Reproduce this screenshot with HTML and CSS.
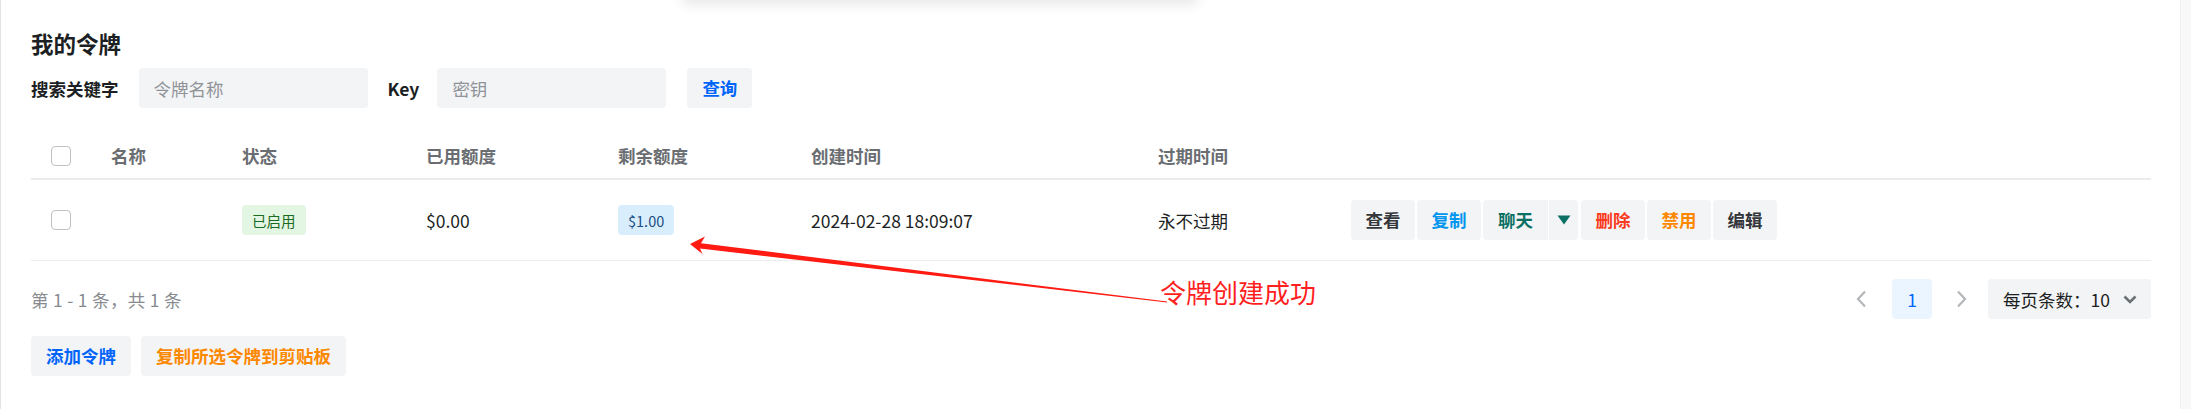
FILE: index.html
```html
<!DOCTYPE html>
<html lang="zh-CN">
<head>
<meta charset="utf-8">
<title>我的令牌</title>
<link rel="stylesheet" href="styles.css">
</head>
<body>
<div class="page">
  <div class="topcard"></div>
  <main class="content">
    <h1 class="title">我的令牌</h1>
    <div class="search">
      <span class="label">搜索关键字</span>
      <div class="input"><span class="ph">令牌名称</span></div>
      <span class="label key">Key</span>
      <div class="input"><span class="ph">密钥</span></div>
      <button class="btn btn-blue">查询</button>
    </div>

    <div class="table">
      <div class="row thead">
        <div class="cell"><span class="checkbox"></span></div>
        <div class="cell">名称</div>
        <div class="cell">状态</div>
        <div class="cell">已用额度</div>
        <div class="cell">剩余额度</div>
        <div class="cell">创建时间</div>
        <div class="cell">过期时间</div>
        <div class="cell"></div>
      </div>
      <div class="row tbody">
        <div class="cell"><span class="checkbox"></span></div>
        <div class="cell"></div>
        <div class="cell"><span class="tag tag-green">已启用</span></div>
        <div class="cell">$0.00</div>
        <div class="cell"><span class="tag tag-blue">$1.00</span></div>
        <div class="cell">2024-02-28 18:09:07</div>
        <div class="cell">永不过期</div>
        <div class="cell actions">
          <button class="btn act c-dark">查看</button>
          <button class="btn act c-lblue">复制</button>
          <div class="split">
            <button class="btn act c-teal left">聊天</button>
            <button class="btn act-arrow right" aria-label="更多">
              <svg width="14" height="10" viewBox="0 0 14 10"><path d="M0.5 0.5 H13.5 L7 9.5 Z" fill="#0b7064"/></svg>
            </button>
          </div>
          <button class="btn act c-red">删除</button>
          <button class="btn act c-orange">禁用</button>
          <button class="btn act c-dark">编辑</button>
        </div>
      </div>
    </div>

    <div class="pager">
      <div class="total">第 1 - 1 条，共 1 条</div>
      <div class="pages">
        <span class="pg-arrow prev">
          <svg width="12" height="18" viewBox="0 0 12 18"><polyline points="10,1.5 3,9 10,16.5" fill="none" stroke="#b4b7ba" stroke-width="2.2"/></svg>
        </span>
        <span class="pg-num">1</span>
        <span class="pg-arrow next">
          <svg width="12" height="18" viewBox="0 0 12 18"><polyline points="2,1.5 9,9 2,16.5" fill="none" stroke="#b4b7ba" stroke-width="2.2"/></svg>
        </span>
        <div class="pagesize">
          <span>每页条数：10</span>
          <svg width="14" height="9" viewBox="0 0 14 9"><polyline points="1.5,1.5 7,7 12.5,1.5" fill="none" stroke="#6b7075" stroke-width="2.6"/></svg>
        </div>
      </div>
    </div>

    <div class="footer-btns">
      <button class="btn btn-blue">添加令牌</button>
      <button class="btn btn-orange">复制所选令牌到剪贴板</button>
    </div>
  </main>
  <div class="scrollbar"></div>

  <svg class="annot-arrow" width="2191" height="409" viewBox="0 0 2191 409">
    <polygon points="689,244 704,236.5 700,243.2 1166,301.6 1166,302.4 699,248.5 701.5,254" fill="#ff1a12"/>
  </svg>
  <div class="annot-text">令牌创建成功</div>
</div>
</body>
</html>
```

FILE: styles.css
```css
* { box-sizing: border-box; }

html, body {
  margin: 0;
  padding: 0;
  background: #ffffff;
}

body {
  font-family: "Noto Sans CJK SC", "Noto Sans", "Liberation Sans", sans-serif;
  font-size: 17.5px;
  color: #1c1f23;
}

.page {
  position: relative;
  display: flex;
  height: 409px;
  overflow: hidden;
  border-left: 1px solid #e4e4e4;
}

.topcard {
  position: absolute;
  left: 680px;
  top: -30px;
  width: 518px;
  height: 30px;
  background: #fff;
  border-radius: 8px;
  box-shadow: 0 4px 14px rgba(0, 0, 0, 0.10);
}

.content {
  flex: 1;
  padding: 0 29px 0 30px;
}

.scrollbar {
  width: 11px;
  background: #f8f8f8;
  border-left: 1px solid #f1f1f1;
}

.title {
  margin: 0;
  padding-top: 27px;
  font-size: 22.5px;
  line-height: 32px;
  font-weight: 700;
  color: #1c1f23;
}

.search {
  margin-top: 9px;
  display: flex;
  align-items: center;
  height: 40px;
}

.label {
  font-weight: 700;
  color: #1c1f23;
  margin-right: 20px;
}

.label.key {
  margin-left: 20px;
  margin-right: 18px;
  font-weight: 600;
}

.input {
  width: 229px;
  height: 40px;
  background: #f3f4f5;
  border-radius: 4px;
  display: flex;
  align-items: center;
  padding-left: 15px;
}

.ph { color: #8f9399; }

.btn {
  font-family: inherit;
  font-size: 17.5px;
  font-weight: 700;
  height: 40px;
  border: none;
  background: #f3f4f5;
  border-radius: 4px;
  padding: 0 15px;
  cursor: pointer;
  line-height: 40px;
}

.search .btn { margin-left: 21px; }

.btn-blue { color: #0064fa; }
.btn-orange { color: #fc8800; }

.table {
  margin-top: 27px;
}

.row {
  display: grid;
  grid-template-columns: 60px 131px 184px 192px 193px 347px 193px 1fr;
  align-items: center;
}

.cell {
  padding-left: 20px;
  display: flex;
  align-items: center;
}

.thead {
  height: 45px;
  border-bottom: 2px solid #ebebeb;
  font-weight: 700;
  color: #6a6d71;
  padding-bottom: 2px;
}

.tbody {
  height: 81px;
  border-bottom: 1px solid #ececec;
}

.checkbox {
  width: 20px;
  height: 20px;
  border: 1.5px solid #bfc2c6;
  border-radius: 4px;
  background: #fff;
  display: inline-block;
}

.tag {
  display: inline-flex;
  align-items: center;
  height: 30px;
  padding: 0 10px;
  border-radius: 4px;
  font-size: 14.5px;
}

.tag-green { background: #e3f5e3; color: #1d6b23; }
.tag-blue { background: #d9eefc; color: #1d4f86; }

.actions {
  display: flex;
  gap: 2px;
}

.act {
  width: 64px;
  padding: 0;
  text-align: center;
}

.split {
  display: flex;
  gap: 1px;
  margin-right: 1px;
}

.split .left { width: 65px; border-radius: 4px 0 0 4px; }
.act-arrow {
  width: 29px;
  padding: 0;
  border-radius: 0 4px 4px 0;
  display: flex;
  align-items: center;
  justify-content: center;
}

.c-dark { color: #33373b; }
.c-lblue { color: #0095ee; }
.c-teal { color: #0b7064; }
.c-red { color: #f93920; }
.c-orange { color: #fc8800; }

.pager {
  margin-top: 18px;
  height: 40px;
  display: flex;
  align-items: center;
  justify-content: space-between;
}

.total {
  color: #878b90;
  letter-spacing: 0.3px;
}

.pages {
  display: flex;
  align-items: center;
  height: 40px;
}

.pg-arrow {
  width: 40px;
  height: 40px;
  display: flex;
  align-items: center;
  justify-content: center;
}

.pg-arrow.prev { margin-right: 11px; }
.pg-arrow.next { margin-left: 10px; margin-right: 6px; }

.pg-num {
  width: 40px;
  height: 40px;
  background: #eaf5ff;
  border-radius: 4px;
  color: #0064fa;
  display: flex;
  align-items: center;
  justify-content: center;
}

.pagesize {
  width: 163px;
  height: 40px;
  background: #f3f4f5;
  border-radius: 4px;
  display: flex;
  align-items: center;
  justify-content: space-between;
  padding: 0 14px 0 15px;
  color: #1c1f23;
}

.footer-btns {
  margin-top: 17px;
  display: flex;
  gap: 10px;
}

.annot-arrow {
  position: absolute;
  left: 0;
  top: 0;
  pointer-events: none;
}

.annot-text {
  position: absolute;
  left: 1159px;
  top: 273px;
  font-size: 26px;
  line-height: 38px;
  color: #ff1f1f;
  white-space: nowrap;
}
```
